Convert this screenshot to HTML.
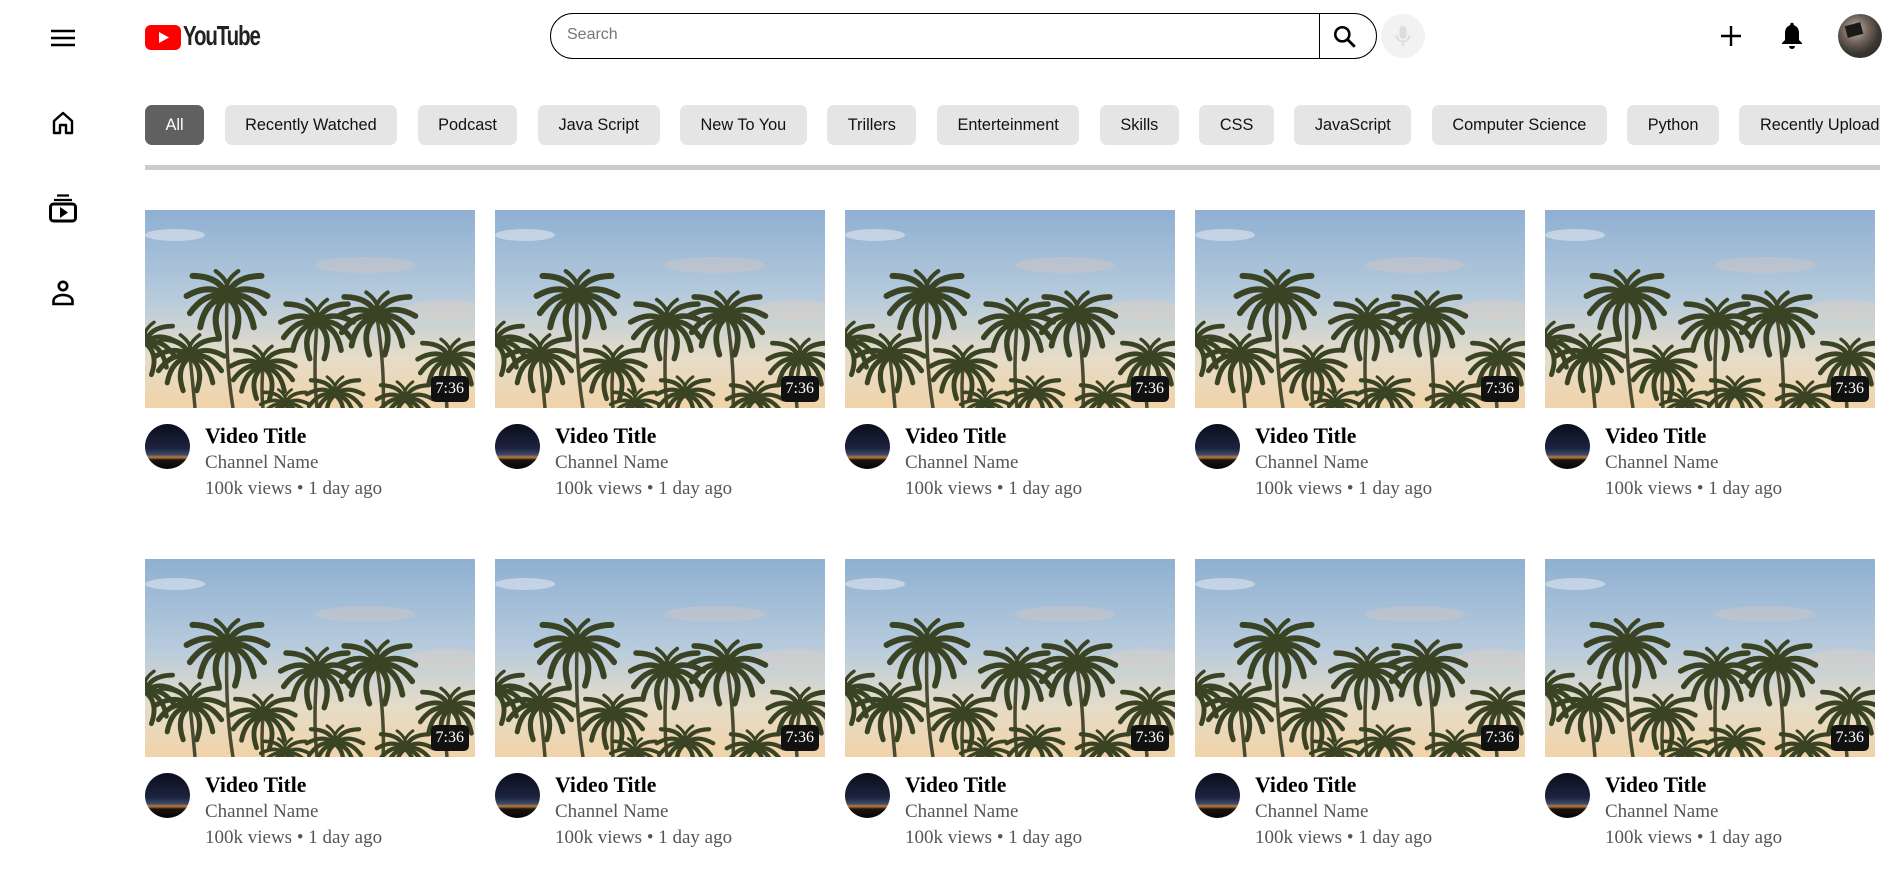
<!DOCTYPE html>
<html><head><meta charset="utf-8"><style>
*{margin:0;padding:0;box-sizing:border-box}
body{width:1892px;height:877px;overflow:hidden;background:#fff;font-family:"Liberation Sans",Arial,sans-serif;position:relative}
.abs{position:absolute}
.chips{position:absolute;left:145px;top:105px;width:1735px;height:40px;overflow:hidden;white-space:nowrap;font-size:0}
.chip{display:inline-block;height:40px;line-height:40px;padding:0 20.5px;margin-right:20.5px;background:#e5e5e5;border-radius:7px;font-size:16.3px;color:#111;vertical-align:top}
.chip.on{background:#606060;color:#fff}
.card{position:absolute;width:330px}
.thumb{width:330px;height:198px;position:relative;overflow:hidden}
.thumb svg{display:block}
.dur{position:absolute;right:6px;bottom:6px;background:#111;color:#fff;font:16px "Liberation Serif",serif;padding:3px 5px;border-radius:5px;line-height:20px}
.av{position:absolute;left:0;top:16px;width:45px;height:45px;border-radius:50%;background:linear-gradient(#0b0d1c 0%,#1d2440 55%,#3a4a6a 68%,#c07a38 74%,#1a1410 80%,#050505 100%)}
.t{position:absolute;left:60px;top:16px;font:bold 21.7px "Liberation Serif",serif;color:#000;white-space:nowrap}
.c{position:absolute;left:60px;top:42px;font:19px/25.5px "Liberation Serif",serif;color:#555;white-space:nowrap}
</style></head><body>
<svg width="0" height="0" style="position:absolute">
<defs>
<linearGradient id="sky" x1="0" y1="0" x2="0" y2="1">
<stop offset="0" stop-color="#8fb0d2"/><stop offset=".45" stop-color="#b7cbdc"/><stop offset=".75" stop-color="#e6dcc8"/><stop offset="1" stop-color="#f0d3a8"/></linearGradient>
<path id="fr" d="M0 0 Q18 -12 40 6" fill="none" stroke="#3a4424" stroke-width="6" stroke-linecap="round"/>
<g id="cr">
<use href="#fr" transform="rotate(-10)"/><use href="#fr" transform="rotate(15)"/><use href="#fr" transform="rotate(40)"/><use href="#fr" transform="rotate(70)"/>
<use href="#fr" transform="scale(-1,1) rotate(-10)"/><use href="#fr" transform="scale(-1,1) rotate(15)"/><use href="#fr" transform="scale(-1,1) rotate(40)"/><use href="#fr" transform="scale(-1,1) rotate(70)"/>
<use href="#fr" transform="rotate(-40)"/><use href="#fr" transform="scale(-1,1) rotate(-40)"/><use href="#fr" transform="rotate(-75) scale(.7)"/><use href="#fr" transform="scale(-1,1) rotate(-75) scale(.7)"/>
</g>
<symbol id="pic" viewBox="0 0 330 198">
<rect width="330" height="198" fill="url(#sky)"/>
<ellipse cx="30" cy="25" rx="30" ry="6" fill="#dfe6ee" opacity=".6"/>
<ellipse cx="220" cy="55" rx="50" ry="8" fill="#d8c8c0" opacity=".4"/>
<ellipse cx="300" cy="100" rx="40" ry="10" fill="#e0cfc4" opacity=".4"/>
<g stroke="#4a4a30" stroke-width="3.5" fill="none">
<path d="M82 87 Q80 150 88 198"/><path d="M172 113 Q168 160 172 198"/><path d="M232 107 Q240 160 238 198"/>
<path d="M45 147 Q48 175 50 198"/><path d="M118 157 Q116 180 118 198"/><path d="M305 150 Q300 180 302 198"/>
</g>
<use href="#cr" transform="translate(82 87)"/>
<use href="#cr" transform="translate(172 113) scale(.9)"/>
<use href="#cr" transform="translate(232 107) scale(.95)"/>
<use href="#cr" transform="translate(45 147) scale(.85)"/>
<use href="#cr" transform="translate(118 157) scale(.8)"/>
<use href="#cr" transform="translate(305 150) scale(.8)"/>
<use href="#cr" transform="translate(0 133) scale(.8)"/>
<use href="#cr" transform="translate(190 185) scale(.7)"/>
<use href="#cr" transform="translate(260 190) scale(.7)"/>
<use href="#cr" transform="translate(140 195) scale(.6)"/>
</symbol>
</defs></svg>

<svg class="abs" style="left:51px;top:28px" width="24" height="20" viewBox="0 0 24 20"><path d="M0 3h24M0 10h24M0 17h24" stroke="#000" stroke-width="2.4"/></svg>
<svg class="abs" style="left:145px;top:25px" width="36" height="25" viewBox="0 0 36 25"><rect width="36" height="25" rx="6" fill="#f00"/><path d="M14 7l10 5.5-10 5.5z" fill="#fff"/></svg>
<div class="abs" style="left:183px;top:20px;font:bold 28px 'Liberation Sans Narrow','Liberation Sans',sans-serif;letter-spacing:-1.5px;color:#222;transform:scaleX(.73);transform-origin:left">YouTube</div>

<div class="abs" style="left:550px;top:13px;width:827px;height:46px;border:1px solid #000;border-radius:23px"></div>
<div class="abs" style="left:567px;top:26px;font-size:16px;color:#777">Search</div>
<div class="abs" style="left:1319px;top:13px;width:1px;height:46px;background:#000"></div>
<svg class="abs" style="left:1332px;top:24px" width="26" height="26" viewBox="0 0 24 24"><circle cx="9.5" cy="9.5" r="6.5" fill="none" stroke="#000" stroke-width="2.4"/><path d="M14 14l7 7" stroke="#000" stroke-width="2.6"/></svg>
<div class="abs" style="left:1381px;top:14px;width:44px;height:44px;border-radius:50%;background:#f2f2f2"></div>
<svg class="abs" style="left:1391px;top:24px" width="24" height="24" viewBox="0 0 24 24"><rect x="8.5" y="2" width="7" height="13" rx="3.5" fill="#ddd"/><path d="M5.5 11a6.5 6.5 0 0013 0M12 17.5V22" fill="none" stroke="#ddd" stroke-width="2"/></svg>

<svg class="abs" style="left:1720px;top:25px" width="22" height="22" viewBox="0 0 22 22"><path d="M11 1v20M1 11h20" stroke="#000" stroke-width="2.4"/></svg>
<svg class="abs" style="left:1780px;top:22px" width="24" height="28" viewBox="0 0 24 28"><path d="M12 3c-4.5 0-7 3.5-7 8v7l-3 3v1h20v-1l-3-3v-7c0-4.5-2.5-8-7-8z" fill="#000"/><circle cx="12" cy="2.5" r="1.8"/><path d="M9 24a3 3 0 006 0z"/></svg>
<div class="abs" style="left:1838px;top:14px;width:44px;height:44px;border-radius:50%;background:radial-gradient(circle at 40% 35%,#bfb6ad 0%,#6e625a 35%,#3b3833 60%,#222 100%);overflow:hidden"><div style="position:absolute;left:8px;top:10px;width:16px;height:12px;background:#1a1a1a;transform:rotate(-15deg)"></div></div>

<svg class="abs" style="left:52px;top:111px" width="22" height="24" viewBox="0 0 22 24"><path d="M2 22V10L11 2l9 8v12h-6v-8h-6v8z" fill="none" stroke="#000" stroke-width="2.4" stroke-linejoin="round"/></svg>
<svg class="abs" style="left:49px;top:194px" width="28" height="29" viewBox="0 0 28 29"><path d="M8 1.5h12M5 6h18" stroke="#000" stroke-width="2.2"/><rect x="1.5" y="10" width="25" height="17" rx="3" fill="none" stroke="#000" stroke-width="3"/><path d="M11 13v11l8-5.5z"/></svg>
<svg class="abs" style="left:52px;top:280px" width="22" height="26" viewBox="0 0 22 26"><circle cx="11" cy="6" r="4.2" fill="none" stroke="#000" stroke-width="2.6"/><path d="M1.5 24v-3c0-3.5 4-6 9.5-6s9.5 2.5 9.5 6v3z" fill="none" stroke="#000" stroke-width="2.6"/></svg>

<div class="chips"><span class="chip on">All</span><span class="chip">Recently Watched</span><span class="chip">Podcast</span><span class="chip">Java Script</span><span class="chip">New To You</span><span class="chip">Trillers</span><span class="chip">Enterteinment</span><span class="chip">Skills</span><span class="chip">CSS</span><span class="chip">JavaScript</span><span class="chip">Computer Science</span><span class="chip">Python</span><span class="chip">Recently Uploaded</span></div>
<div class="abs" style="left:145px;top:165px;width:1735px;height:5px;background:#ccc"></div>

<div id="grid"></div>
<script>
var h='';var xs=[145,495,845,1195,1545],ys=[210,559];
ys.forEach(function(y){xs.forEach(function(x){
h+='<div class="card" style="left:'+x+'px;top:'+y+'px"><div class="thumb"><svg width="330" height="198"><use href="#pic"/></svg><span class="dur">7:36</span></div><div style="position:relative"><div class="av"></div><div class="t">Video Title</div><div class="c">Channel Name<br>100k views • 1 day ago</div></div></div>';
});});
document.getElementById('grid').innerHTML=h;
</script>
</body></html>
